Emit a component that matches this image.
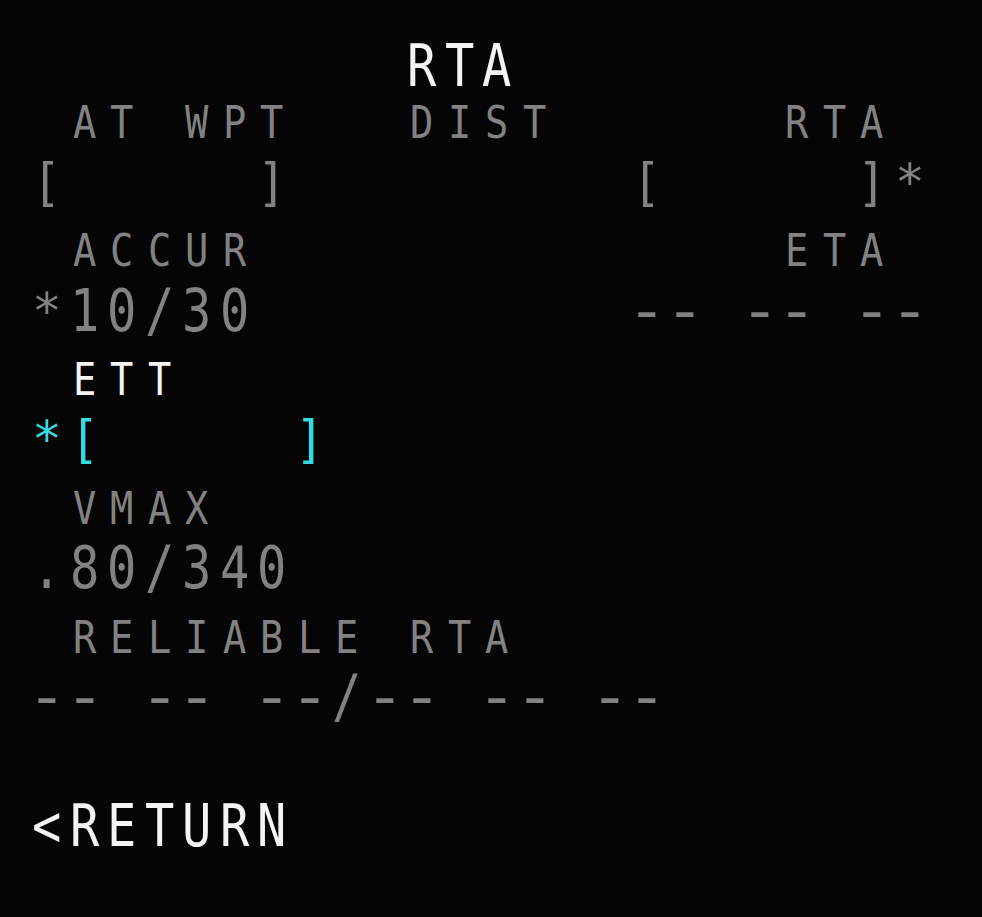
import React from 'react';

// per-glyph tweaks so DejaVu looks closer to the MCDU font
const glyphClass = (c: string, small?: boolean) => {
  if (c === '-') return 'scale-x-[1.15]';
  if (c === '[' || c === ']') return 'scale-x-[0.84] scale-y-[0.9]';
  if (c === '*') return 'scale-[0.85]';
  return small ? 'scale-x-[0.88]' : 'scale-x-[0.84]';
};

// one MCDU line: 24 fixed columns of 37.5px, every glyph centred in its own cell
const Row: React.FC<{ text: string; color: string; small?: boolean; h?: string }> = ({ text, color, small, h = 'h-[64.4px] leading-[64.4px]' }) => (
  <div className={`${h} whitespace-pre text-[58px] pl-[28.25px] ${color}`}>
    {text.split('').map((c, i) => (
      <span
        key={i}
        className={`inline-block w-[37.5px] text-center ${small ? 'text-[44px]' : 'text-[58px]'} ${glyphClass(c, small)}`}
      >
        {c}
      </span>
    ))}
  </div>
);

const GRAY = 'text-[#828282]';
const WHITE = 'text-[#f4f4f4]';
const CYAN = 'text-[#33dbe3]';

const App: React.FC = () => {
  return (
    <div
      className="w-[982px] h-[917px] bg-[#050505] overflow-hidden pt-[48px]"
      style={{ fontFamily: '"DejaVu Sans Mono", "Liberation Mono", monospace' }}
    >
      <Row text="          RTA" color={WHITE} h="h-[37.5px] leading-[37.5px]" />

      <Row small text=" AT WPT   DIST      RTA" color={GRAY} />
      <Row text="[     ]         [     ]*" color={GRAY} />

      <Row small text=" ACCUR              ETA" color={GRAY} />
      <Row text="*10/30          -- -- --" color={GRAY} />

      <Row small text=" ETT" color={WHITE} />
      <Row text="*[     ]" color={CYAN} />

      <Row small text=" VMAX" color={GRAY} />
      <Row text=".80/340" color={GRAY} />

      <Row small text=" RELIABLE RTA" color={GRAY} />
      <Row text="-- -- --/-- -- --" color={GRAY} />

      <Row text=" " color={GRAY} />
      <Row text="<RETURN" color={WHITE} />
    </div>
  );
};

export default App;
